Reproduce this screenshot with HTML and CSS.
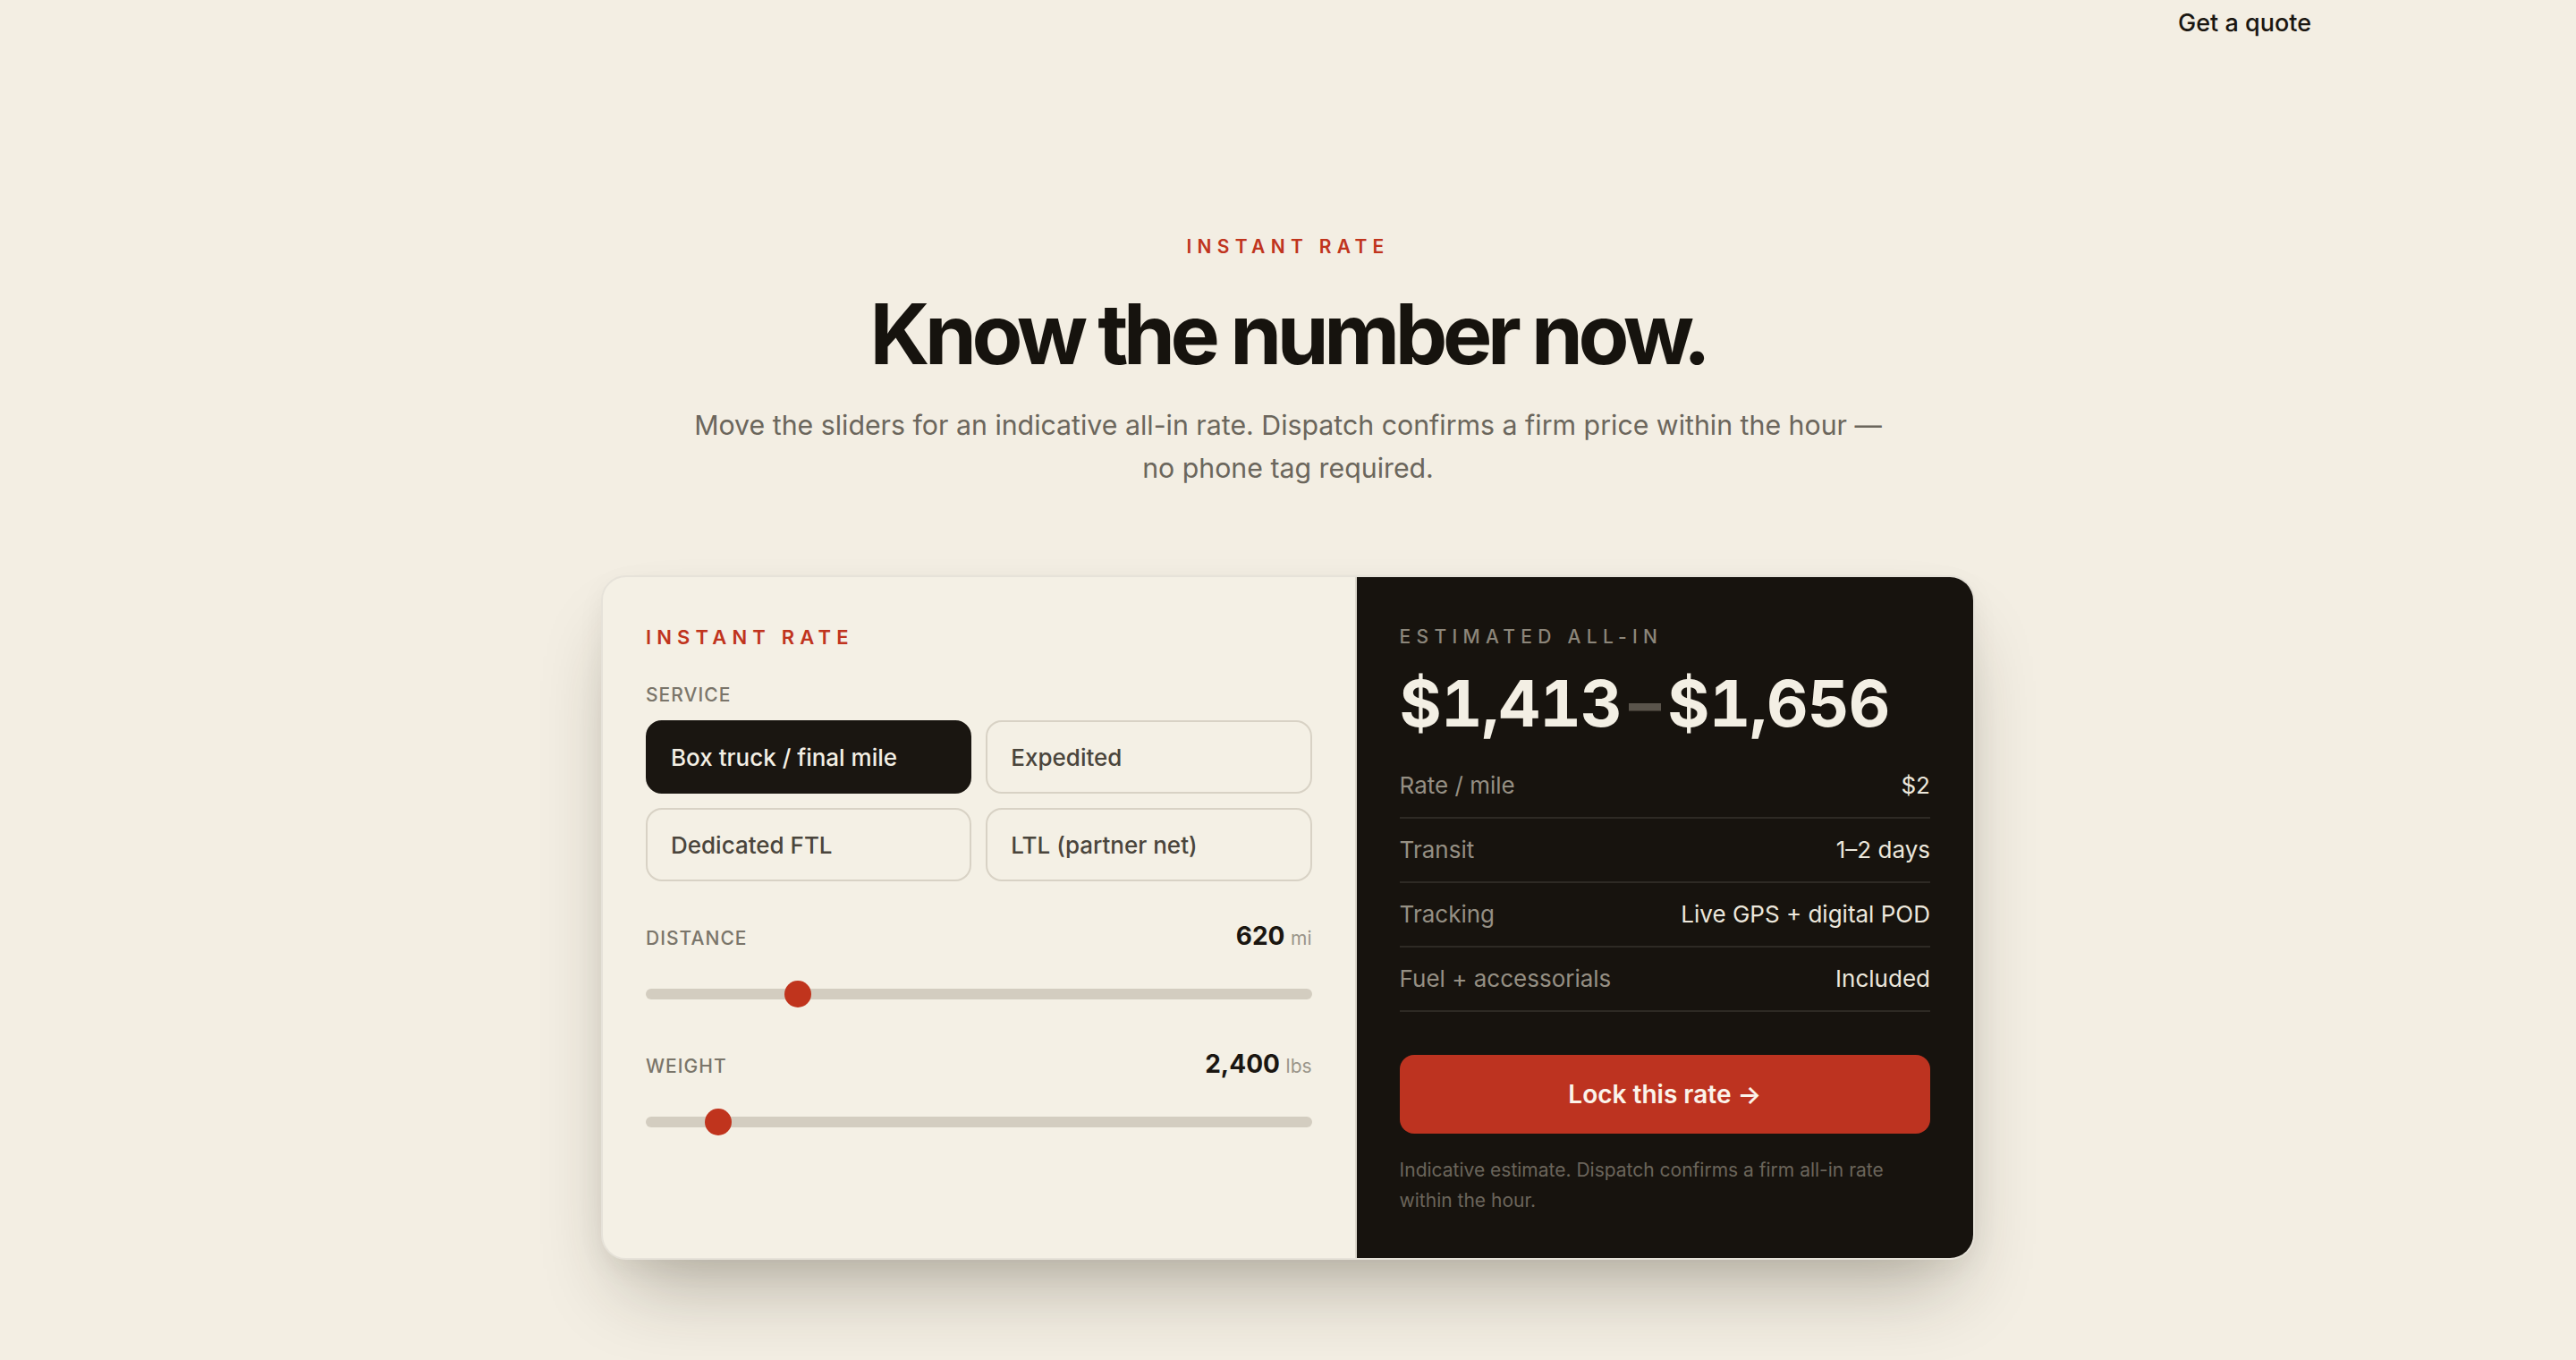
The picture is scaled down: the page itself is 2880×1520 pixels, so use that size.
FILE: index.html
```html
<!DOCTYPE html>
<html lang="en">
<head>
<meta charset="utf-8">
<title>Instant rate</title>
<link rel="stylesheet" href="styles.css">
</head>
<body>
<header class="topbar">
  <a class="topbar-link" href="#quote">Get a quote</a>
</header>
<main class="hero">
  <p class="eyebrow">INSTANT RATE</p>
  <h1 class="headline">Know the number now.</h1>
  <p class="lede">Move the sliders for an indicative all-in rate. Dispatch confirms a firm price within the hour — no phone tag required.</p>

  <section class="card">
    <div class="card-form">
      <p class="eyebrow eyebrow-left">INSTANT RATE</p>
      <p class="field-label">SERVICE</p>
      <div class="service-grid">
        <button class="service service-active">Box truck / final mile</button>
        <button class="service">Expedited</button>
        <button class="service">Dedicated FTL</button>
        <button class="service">LTL (partner net)</button>
      </div>

      <div class="slider-group">
        <div class="slider-head">
          <span class="field-label">DISTANCE</span>
          <span class="slider-value">620 <span class="unit">mi</span></span>
        </div>
        <input class="range" type="range" min="0" max="2850" step="10" value="620">
      </div>

      <div class="slider-group">
        <div class="slider-head">
          <span class="field-label">WEIGHT</span>
          <span class="slider-value">2,400 <span class="unit">lbs</span></span>
        </div>
        <input class="range" type="range" min="0" max="26000" step="100" value="2400">
      </div>
    </div>

    <div class="card-result">
      <p class="result-label">ESTIMATED ALL-IN</p>
      <p class="price">$1,413<span class="price-dash">–</span>$1,656</p>
      <dl class="facts">
        <div class="fact"><dt>Rate / mile</dt><dd>$2</dd></div>
        <div class="fact"><dt>Transit</dt><dd>1–2 days</dd></div>
        <div class="fact"><dt>Tracking</dt><dd>Live GPS + digital POD</dd></div>
        <div class="fact"><dt>Fuel + accessorials</dt><dd>Included</dd></div>
      </dl>
      <button class="cta">Lock this rate →</button>
      <p class="footnote">Indicative estimate. Dispatch confirms a firm all-in rate within the hour.</p>
    </div>
  </section>
</main>
</body>
</html>
```

FILE: styles.css
```css
* { box-sizing: border-box; }

html, body {
  margin: 0;
  background: #f3eee3;
  color: #1a1611;
  font-family: Inter, "Noto Sans", "Liberation Sans", sans-serif;
}

.topbar {
  display: flex;
  justify-content: flex-end;
  padding: 6px 296px 0;
}

.topbar-link {
  font-size: 27px;
  line-height: 40px;
  font-weight: 500;
  color: #1a1611;
  text-decoration: none;
}

.hero {
  display: flex;
  flex-direction: column;
  align-items: center;
  text-align: center;
  padding-top: 214px;
  padding-bottom: 120px;
}

.eyebrow {
  margin: 0;
  font-size: 21px;
  line-height: 32px;
  font-weight: 600;
  letter-spacing: 0.3em;
  color: #c0341d;
}

.headline {
  margin: 31px 0 0;
  font-size: 93px;
  line-height: 100px;
  font-weight: 700;
  letter-spacing: -0.058em;
  color: #16130e;
}

.lede {
  margin: 28px 0 0;
  max-width: 1344px;
  font-size: 30.3px;
  line-height: 48px;
  color: #6b665c;
}

.card {
  margin-top: 96px;
  width: 1536px;
  display: grid;
  grid-template-columns: 55fr 45fr;
  text-align: left;
  border: 2px solid #e6e2d9;
  border-radius: 28px;
  overflow: hidden;
  background: #f4f0e5;
  box-shadow: 0 50px 90px -26px rgba(40, 34, 20, 0.32), 0 10px 30px rgba(40, 34, 20, 0.05);
}

.card-form {
  padding: 51px 48px 48px 48px;
  border-right: 2px solid #dcd7cc;
}

.eyebrow-left {
  font-size: 22px;
  letter-spacing: 0.28em;
}

.field-label {
  margin: 0;
  font-size: 21px;
  line-height: 32px;
  font-weight: 500;
  letter-spacing: 0.05em;
  color: #7a756a;
}

.card-form > .field-label {
  margin-top: 33px;
}

.service-grid {
  margin-top: 12px;
  display: grid;
  grid-template-columns: 1fr 1fr;
  gap: 16px;
}

.service {
  height: 82px;
  padding: 0 26px;
  text-align: left;
  font-family: inherit;
  font-size: 26px;
  font-weight: 500;
  color: #4a453c;
  background: transparent;
  border: 2px solid #d8d2c5;
  border-radius: 18px;
}

.service-active {
  background: #1a1611;
  border-color: #1a1611;
  color: #f3efe4;
}

.slider-group {
  margin-top: 42px;
}

.slider-group + .slider-group {
  margin-top: 44px;
}

.slider-head {
  display: flex;
  justify-content: space-between;
  align-items: baseline;
  line-height: 39px;
}

.slider-value {
  font-size: 28px;
  font-weight: 700;
  color: #1a1611;
}

.unit {
  font-size: 21px;
  font-weight: 400;
  color: #9a958a;
}

.range {
  -webkit-appearance: none;
  appearance: none;
  display: block;
  width: 100%;
  height: 30px;
  margin: 28px 0 0;
  background: transparent;
}

.range::-webkit-slider-runnable-track {
  height: 12px;
  border-radius: 6px;
  background: #d3cdc0;
}

.range::-webkit-slider-thumb {
  -webkit-appearance: none;
  appearance: none;
  width: 30px;
  height: 30px;
  margin-top: -9px;
  border-radius: 50%;
  background: #c0341d;
  border: none;
}

.card-result {
  background: #17130e;
  color: #f3efe4;
  padding: 51px 48px 47px;
}

.result-label {
  margin: 0;
  font-size: 21px;
  line-height: 32px;
  font-weight: 500;
  letter-spacing: 0.3em;
  color: #8c867a;
}

.price {
  margin: 18px 0 0;
  font-size: 72px;
  line-height: 79px;
  font-weight: 700;
  letter-spacing: -0.01em;
  font-variant-numeric: tabular-nums;
  color: #f3efe4;
  white-space: nowrap;
}

.price-dash {
  margin: 0 8px;
  color: #5a544b;
}

.facts {
  margin: 18px 0 0;
}

.fact {
  display: flex;
  justify-content: space-between;
  padding: 16px 0;
  border-bottom: 2px solid #2e2a24;
  font-size: 26px;
  line-height: 38px;
}

.fact dt {
  color: #958f83;
}

.fact dd {
  margin: 0;
  color: #ece7dc;
}

.cta {
  display: block;
  width: 100%;
  height: 88px;
  margin-top: 48px;
  border: none;
  border-radius: 16px;
  background: #bd3320;
  color: #fbf3ea;
  font-family: inherit;
  font-size: 28px;
  font-weight: 600;
}

.footnote {
  margin: 24px 0 0;
  font-size: 21px;
  line-height: 34px;
  color: #6b655b;
}
```
